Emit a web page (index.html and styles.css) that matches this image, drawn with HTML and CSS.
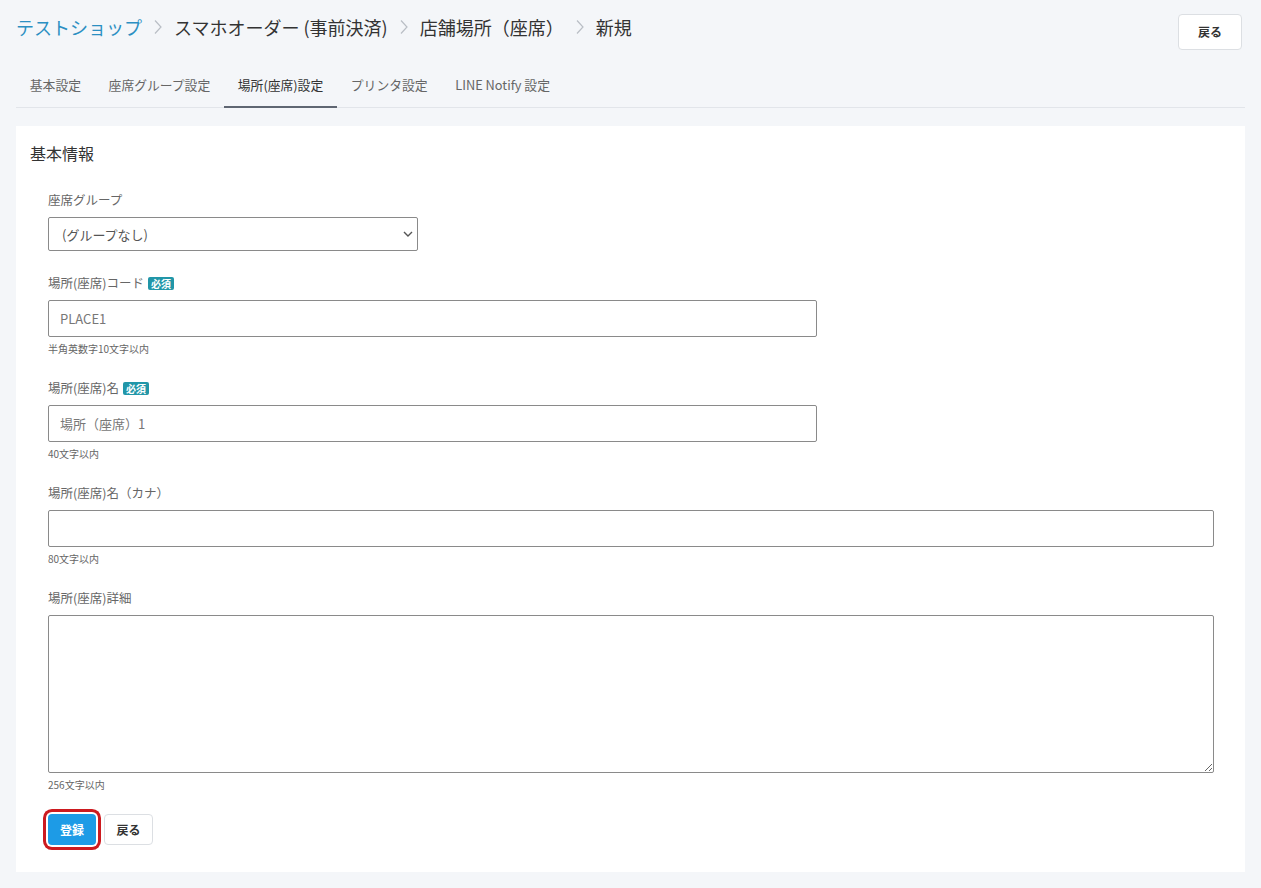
FILE: index.html
```html
<!DOCTYPE html>
<html lang="ja">
<head>
<meta charset="utf-8">
<title>新規</title>
<link rel="stylesheet" href="styles.css">
</head>
<body>
<div class="page">
  <header class="topbar">
    <nav class="crumbs">
      <a class="crumb-link" href="#">テストショップ</a>
      <svg class="chev" width="10" height="16" viewBox="0 0 10 16"><polyline points="2,1.5 8,8 2,14.5" fill="none" stroke="#b9bec5" stroke-width="1.2"/></svg>
      <span class="crumb">スマホオーダー (事前決済)</span>
      <svg class="chev" width="10" height="16" viewBox="0 0 10 16"><polyline points="2,1.5 8,8 2,14.5" fill="none" stroke="#b9bec5" stroke-width="1.2"/></svg>
      <span class="crumb">店舗場所（座席）</span>
      <svg class="chev" width="10" height="16" viewBox="0 0 10 16"><polyline points="2,1.5 8,8 2,14.5" fill="none" stroke="#b9bec5" stroke-width="1.2"/></svg>
      <span class="crumb">新規</span>
    </nav>
    <button class="btn btn-light btn-top">戻る</button>
  </header>

  <nav class="tabs">
    <a class="tab" href="#">基本設定</a>
    <a class="tab" href="#">座席グループ設定</a>
    <a class="tab active" href="#">場所(座席)設定</a>
    <a class="tab" href="#">プリンタ設定</a>
    <a class="tab" href="#">LINE Notify 設定</a>
  </nav>

  <section class="card">
    <h2 class="card-title">基本情報</h2>
    <form class="form">
      <div class="group">
        <label class="label">座席グループ</label>
        <div class="select-wrap">
          <select class="select"><option>(グループなし)</option></select>
          <svg class="select-arrow" width="10" height="6" viewBox="0 0 10 6"><polyline points="1,1 5,5 9,1" fill="none" stroke="#555" stroke-width="1.4"/></svg>
        </div>
      </div>
      <div class="group">
        <label class="label">場所(座席)コード <span class="badge">必須</span></label>
        <input class="input w-md" type="text" value="PLACE1">
        <div class="help">半角英数字10文字以内</div>
      </div>
      <div class="group">
        <label class="label">場所(座席)名 <span class="badge">必須</span></label>
        <input class="input w-md" type="text" value="場所（座席）1">
        <div class="help">40文字以内</div>
      </div>
      <div class="group">
        <label class="label">場所(座席)名（カナ）</label>
        <input class="input w-full" type="text" value="">
        <div class="help">80文字以内</div>
      </div>
      <div class="group">
        <label class="label">場所(座席)詳細</label>
        <textarea class="textarea"></textarea>
        <div class="help">256文字以内</div>
      </div>
      <div class="actions">
        <button type="button" class="btn btn-primary">登録</button>
        <button type="button" class="btn btn-light">戻る</button>
      </div>
    </form>
  </section>
</div>
</body>
</html>
```
FILE: styles.css
```css
* { box-sizing: border-box; }
html, body {
  margin: 0;
  padding: 0;
  background: #f4f6f9;
}
body {
  font-family: "Noto Sans CJK JP", "Noto Sans", sans-serif;
  color: #333;
}
.page {
  padding: 0 16px 16px;
}
.topbar {
  display: flex;
  justify-content: space-between;
  align-items: flex-start;
  height: 63px;
  padding-top: 14px;
}
.crumbs {
  display: flex;
  align-items: center;
  gap: 9px;
  font-size: 18px;
  line-height: 26px;
}
.crumb-link {
  color: #2b8fc2;
  text-decoration: none;
}
.crumb {
  color: #333;
}
.chev { display: block; margin: 0 2px; }
.btn {
  font-family: inherit;
  font-size: 12px;
  font-weight: 700;
  border-radius: 4px;
  cursor: pointer;
  line-height: 1;
}
.btn-light {
  background: #fff;
  border: 1px solid #dcdfe3;
  color: #333;
}
.btn-top {
  width: 64px;
  height: 36px;
  margin-right: 3px;
}
.tabs {
  display: flex;
  border-bottom: 1px solid #e2e5ea;
  height: 45px;
}
.tab {
  display: block;
  padding: 13px 13.8px 0;
  height: 45px;
  font-size: 12.8px;
  line-height: 18px;
  color: #666;
  text-decoration: none;
}
.tab.active {
  color: #333;
  border-bottom: 2px solid #5f6672;
}
.card {
  margin-top: 18px;
  background: #fff;
  padding: 15px 14px 27px;
}
.card-title {
  margin: 0;
  font-size: 16px;
  font-weight: 400;
  line-height: 24px;
  color: #333;
}
.form {
  padding: 26px 17px 0 18px;
}
.group {
  margin-bottom: 23px;
}
.label {
  display: flex;
  align-items: center;
  gap: 4px;
  font-size: 12.5px;
  line-height: 18px;
  color: #666;
  margin-bottom: 8px;
}
.badge {
  display: inline-block;
  background: #2196a8;
  color: #fff;
  font-size: 10px;
  font-weight: 700;
  line-height: 13px;
  padding: 0 3px;
  border-radius: 2px;
}
.select-wrap {
  position: relative;
  width: 370px;
}
.select {
  appearance: none;
  -webkit-appearance: none;
  width: 370px;
  height: 34px;
  border: 1px solid #8a8a8a;
  border-radius: 2px;
  background: #fff;
  font-family: inherit;
  font-size: 13px;
  color: #555;
  padding: 0 13px;
}
.select-arrow {
  position: absolute;
  right: 5px;
  top: 14px;
}
.input {
  display: block;
  height: 37px;
  border: 1px solid #8a8a8a;
  border-radius: 2px;
  background: #fff;
  font-family: inherit;
  font-size: 13px;
  color: #777;
  padding: 0 11px;
}
.w-md { width: 769px; }
.w-full { width: 100%; }
.textarea {
  display: block;
  width: 100%;
  height: 158px;
  border: 1px solid #8a8a8a;
  border-radius: 2px;
  font-family: inherit;
  font-size: 13px;
  resize: vertical;
}
.help {
  margin-top: 4px;
  font-size: 10px;
  line-height: 15px;
  color: #666;
}
.actions {
  display: flex;
  gap: 8px;
  margin-top: -1px;
}
.btn-primary {
  width: 48px;
  height: 31px;
  background: #1d9be6;
  border: none;
  color: #fff;
  border-radius: 4px;
  box-shadow: 0 0 0 2px #fff, 0 0 0 5px #cc1a1f;
}
.actions .btn-light {
  width: 49px;
  height: 31px;
}
```
